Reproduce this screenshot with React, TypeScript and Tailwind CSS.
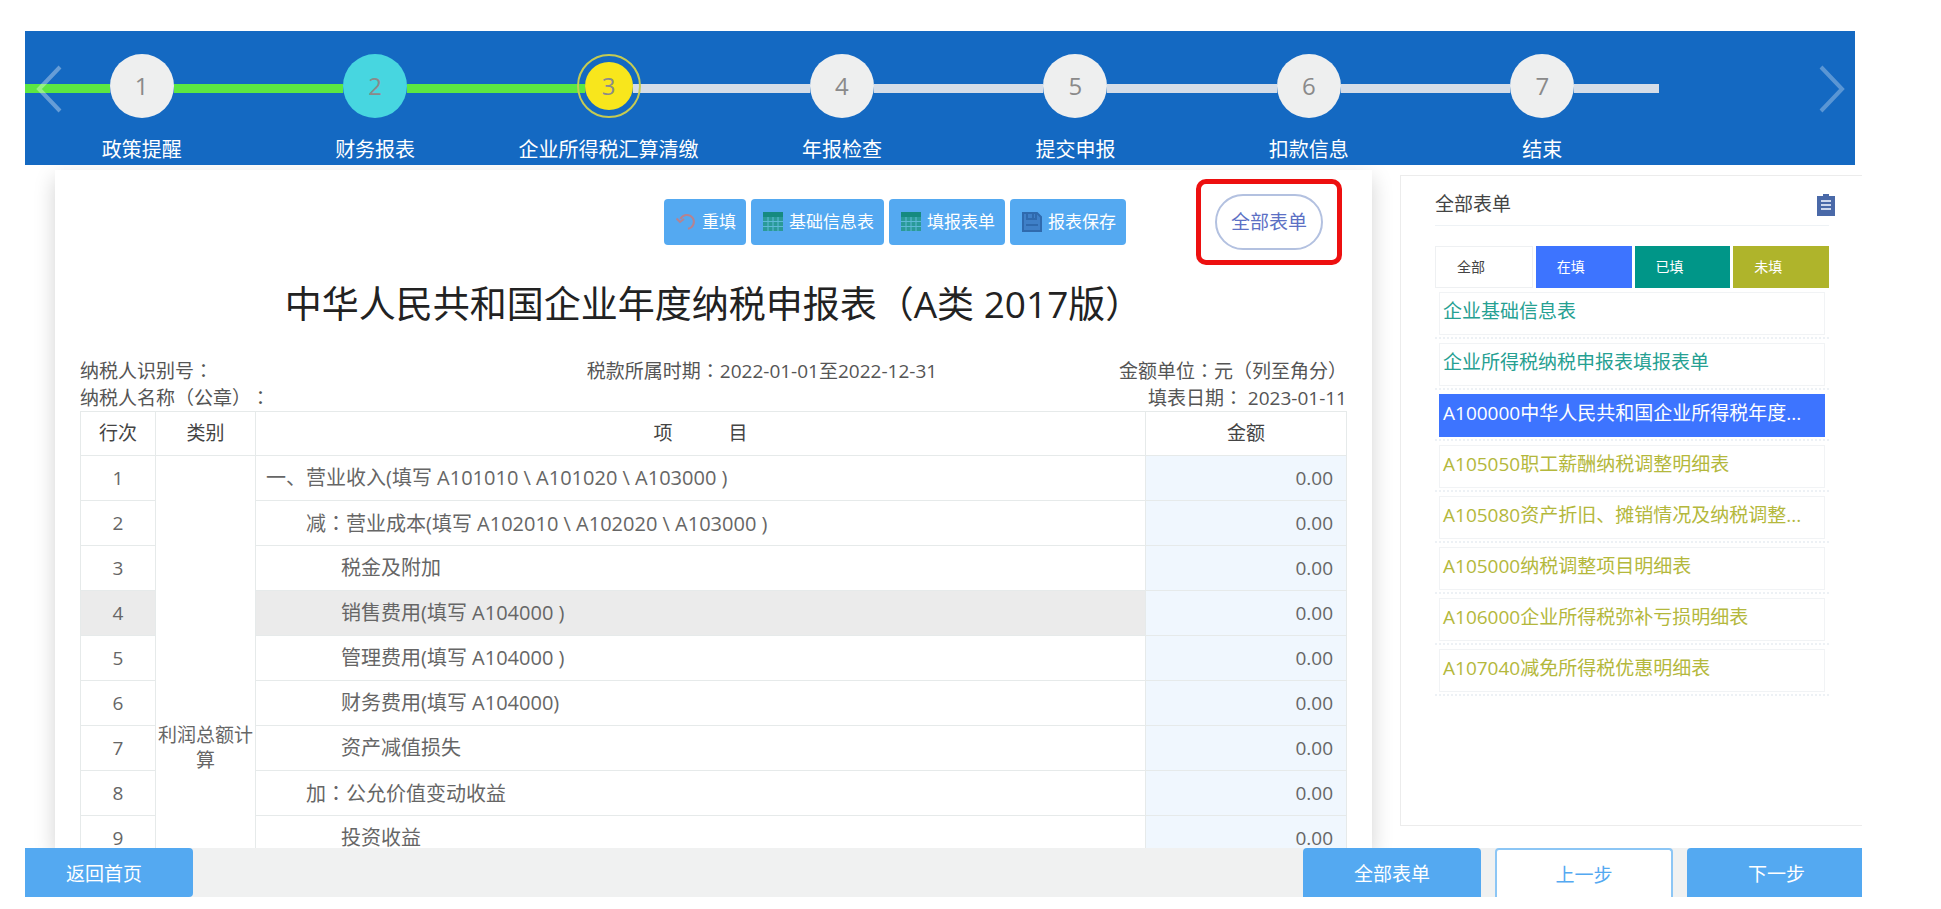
import React from 'react';
import clsx from 'clsx';

interface Step {
  label: string;
  state: 'visited' | 'done' | 'current' | 'todo';
}

interface ReportRow {
  no: string;
  item: string;
  indent: string;
  amount: string;
}

interface FormLink {
  title: string;
  status: 'filled' | 'editing' | 'empty';
}

const STEPS: Step[] = [
  { label: '政策提醒', state: 'visited' },
  { label: '财务报表', state: 'done' },
  { label: '企业所得税汇算清缴', state: 'current' },
  { label: '年报检查', state: 'todo' },
  { label: '提交申报', state: 'todo' },
  { label: '扣款信息', state: 'todo' },
  { label: '结束', state: 'todo' },
];

const ROWS: ReportRow[] = [
  { no: '1', item: '一、营业收入(填写 A101010 \\ A101020 \\ A103000 )', indent: 'pl-[10px]', amount: '0.00' },
  { no: '2', item: '减：营业成本(填写 A102010 \\ A102020 \\ A103000 )', indent: 'pl-[50px]', amount: '0.00' },
  { no: '3', item: '税金及附加', indent: 'pl-[85px]', amount: '0.00' },
  { no: '4', item: '销售费用(填写 A104000 )', indent: 'pl-[85px]', amount: '0.00' },
  { no: '5', item: '管理费用(填写 A104000 )', indent: 'pl-[85px]', amount: '0.00' },
  { no: '6', item: '财务费用(填写 A104000)', indent: 'pl-[85px]', amount: '0.00' },
  { no: '7', item: '资产减值损失', indent: 'pl-[85px]', amount: '0.00' },
  { no: '8', item: '加：公允价值变动收益', indent: 'pl-[50px]', amount: '0.00' },
  { no: '9', item: '投资收益', indent: 'pl-[85px]', amount: '0.00' },
];

// The profit section spans 13 lines of the form
const SECTION_LINES = 13;
const ACTIVE_ROW = '4';

const FORMS: FormLink[] = [
  { title: '企业基础信息表', status: 'filled' },
  { title: '企业所得税纳税申报表填报表单', status: 'filled' },
  { title: 'A100000中华人民共和国企业所得税年度...', status: 'editing' },
  { title: 'A105050职工薪酬纳税调整明细表', status: 'empty' },
  { title: 'A105080资产折旧、摊销情况及纳税调整...', status: 'empty' },
  { title: 'A105000纳税调整项目明细表', status: 'empty' },
  { title: 'A106000企业所得税弥补亏损明细表', status: 'empty' },
  { title: 'A107040减免所得税优惠明细表', status: 'empty' },
];

const FORM_STYLES: Record<FormLink['status'], string> = {
  filled: 'border-[#f1f3f5] text-[#26a092]',
  editing: 'border-[#3d74ff] bg-[#3d74ff] text-white',
  empty: 'border-[#f1f3f5] text-[#b4b83c]',
};

const FILTERS = [
  { label: '全部', className: 'border border-[#eef0f2] bg-white text-[#444]' },
  { label: '在填', className: 'bg-[#3d74ff] text-white' },
  { label: '已填', className: 'bg-[#009688] text-white' },
  { label: '未填', className: 'bg-[#afb42b] text-white' },
];

// Full-width colons and brackets sit in the middle of their cell
const Han: React.FC<{ text: string }> = ({ text }) => (
  <>
    {text.split(/([：（）])/).map((part, i) =>
      i % 2 ? (
        <span key={i} className="font-['Noto_Sans_CJK_TC',sans-serif]">
          {part}
        </span>
      ) : (
        part
      ),
    )}
  </>
);

const ResetIcon = () => (
  <svg viewBox="0 0 20 20" className="size-5" fill="none" stroke="#b58391" strokeWidth="2" aria-hidden>
    <path d="M4.500 7A7 7 0 1 1 12 16.800" />
    <path d="M0.500 6.500L4 10l4-3" />
  </svg>
);

const GridIcon = () => (
  <svg viewBox="0 0 20 20" className="size-5" aria-hidden>
    <path d="M0 0h20v19H0z" fill="#2a9a98" />
    <path d="M0 0h20v5H0z" fill="#168a80" />
    <path d="M0 9.500h20M0 14.500h20M5 5v14M10 5v14M15 5v14" stroke="#5fb9d6" strokeWidth="1" />
  </svg>
);

const SaveIcon = () => (
  <svg viewBox="0 0 20 20" className="size-5" fill="none" stroke="#2f6aae" strokeWidth="2" aria-hidden>
    <path d="M1 1h14l4 4v14H1z" fill="#3f80c8" />
    <path d="M5 1v6h9V1M11 2v4M4 13h12" />
  </svg>
);

const ClipboardIcon = () => (
  <svg viewBox="0 0 18 22" className="h-[22px] w-[18px]" aria-hidden>
    <path d="M6 0h6v2h6v20H0V2h6z" fill="#4a69a8" />
    <path d="M4 7h10M4 11h10M4 15h10" stroke="#cdd7ec" strokeWidth="2" />
  </svg>
);

const TOOLS = [
  { label: '重填', icon: ResetIcon },
  { label: '基础信息表', icon: GridIcon },
  { label: '填报表单', icon: GridIcon },
  { label: '报表保存', icon: SaveIcon },
];

const StepBar: React.FC = () => (
  <nav className="relative mr-[7px] h-[134px] shrink-0 bg-[#1469c2] pt-[23px] pr-[196px]" aria-label="申报步骤">
    <ol className="flex">
      {STEPS.map(({ label, state }, i) => (
        <li key={label} className="flex flex-1 basis-0 flex-col items-center">
          <div className="flex h-16 w-full items-center">
            <span className={clsx('mt-1 h-[9px] flex-1', state === 'todo' ? 'bg-[#d5dde8]' : 'bg-[#5ce742]')} />
            <span
              className={clsx(
                'relative flex items-center justify-center rounded-full text-2xl text-[#8a8a8a]',
                state === 'current' ? 'size-12 bg-[#f8e61c]' : 'size-16',
                state === 'done' && 'bg-[#47d6e0]',
                (state === 'visited' || state === 'todo') && 'bg-[#eeefef]',
              )}
            >
              {i + 1}
              {state === 'current' && (
                <span className="absolute -inset-2 rounded-full border-2 border-[#c5cb52]" />
              )}
            </span>
            <span
              className={clsx(
                'mt-1 h-[9px] flex-1',
                state === 'visited' || state === 'done' ? 'bg-[#5ce742]' : 'bg-[#d5dde8]',
              )}
            />
          </div>
          <span className="mt-5 text-xl leading-6 whitespace-nowrap text-white">{label}</span>
        </li>
      ))}
    </ol>
    <button type="button" aria-label="上一页" className="absolute top-[34px] left-[11px]">
      <svg viewBox="0 0 26 48" className="h-12 w-[26px]" fill="none" stroke="#fff" strokeOpacity="0.35" strokeWidth="4">
        <path d="M24 2L3 24l21 22" />
      </svg>
    </button>
    <button type="button" aria-label="下一页" className="absolute top-[34px] right-[10px]">
      <svg viewBox="0 0 26 48" className="h-12 w-[26px]" fill="none" stroke="#fff" strokeOpacity="0.3" strokeWidth="4">
        <path d="M2 2l21 22L2 46" />
      </svg>
    </button>
  </nav>
);

const ReportTable: React.FC = () => (
  <table className="w-full table-fixed border-collapse text-[#666]">
    <colgroup>
      <col className="w-[75px]" />
      <col className="w-[100px]" />
      <col />
      <col className="w-[201px]" />
    </colgroup>
    <thead>
      <tr className="h-11 text-[#444]">
        <th className="border border-[#e6eaea] font-normal">行次</th>
        <th className="border border-[#e6eaea] font-normal">类别</th>
        <th className="border border-[#e6eaea] font-normal">
          <div className="flex justify-center gap-14">
            <span>项</span>
            <span>目</span>
          </div>
        </th>
        <th className="border border-[#e6eaea] font-normal">金额</th>
      </tr>
    </thead>
    <tbody>
      {ROWS.map((row, i) => (
        <tr key={row.no} className="h-[45px]">
          <td className={clsx('border border-[#e6eaea] text-center', row.no === ACTIVE_ROW && 'bg-[#ebebeb]')}>
            {row.no}
          </td>
          {i === 0 && (
            <td rowSpan={SECTION_LINES} className="border border-[#e6eaea] text-center leading-[25px]">
              利润总额计算
            </td>
          )}
          <td className={clsx('border border-[#e6eaea] text-xl', row.indent, row.no === ACTIVE_ROW && 'bg-[#ebebeb]')}>
            <Han text={row.item} />
          </td>
          <td className="border border-[#e6eaea] bg-[#f0f7fe] pr-[13px] text-right">{row.amount}</td>
        </tr>
      ))}
      {Array.from({ length: SECTION_LINES - ROWS.length }, (_, i) => (
        <tr key={i} className="h-[45px]">
          <td className="border border-[#e6eaea]" />
          <td className="border border-[#e6eaea]" />
          <td className="border border-[#e6eaea] bg-[#f0f7fe]" />
        </tr>
      ))}
    </tbody>
  </table>
);

const ReportCard: React.FC = () => (
  <section className="mt-[5px] ml-[30px] min-w-0 flex-1 bg-white px-[25px] pt-[9px] shadow-[0_8px_20px_rgba(0,0,0,0.18)]">
    <div className="flex items-center justify-end">
      <div className="flex gap-[5px]">
        {TOOLS.map(({ label, icon: Icon }) => (
          <button
            key={label}
            type="button"
            className="flex h-[46px] items-center gap-[6px] rounded-sm bg-[#54a9f1] pr-[10px] pl-3 text-[17px] whitespace-nowrap text-white"
          >
            <Icon />
            {label}
          </button>
        ))}
      </div>
      <div className="mr-[5px] ml-[70px] rounded-[10px] border-[5px] border-[#ed1010] px-[14px] py-[10px]">
        <button
          type="button"
          className="h-14 w-[108px] rounded-full border-2 border-[#b3c1e0] text-[#5c70c4]"
        >
          全部表单
        </button>
      </div>
    </div>

    <h1 className="mt-[13px] text-center text-[37px] leading-[48px] whitespace-nowrap text-[#222]">
      <Han text="中华人民共和国企业年度纳税申报表（A类 2017版）" />
    </h1>

    <div className="mt-[29px] grid grid-cols-[2fr_3fr] leading-[26px] whitespace-nowrap text-[#555]">
      <span>
        <Han text="纳税人识别号：" />
      </span>
      <div className="flex justify-between">
        <span>
          <Han text="税款所属时期：2022-01-01至2022-12-31" />
        </span>
        <span>
          <Han text="金额单位：元（列至角分）" />
        </span>
      </div>
      <span>
        <Han text="纳税人名称（公章）：" />
      </span>
      <span className="text-right">
        <Han text="填表日期： 2023-01-11" />
      </span>
    </div>

    <ReportTable />
  </section>
);

const FormSidebar: React.FC = () => (
  <aside className="mt-[10px] mb-[22px] ml-7 w-[462px] shrink-0 border-y border-l border-[#ececec] bg-white pr-[33px] pl-[34px]">
    <header className="flex h-[50px] items-center justify-between border-b border-[#eef2f5] pt-2">
      <h2 className="text-[#444]">全部表单</h2>
      <span className="-mr-[6px]">
        <ClipboardIcon />
      </span>
    </header>
    <div className="mt-5 flex gap-[3px]">
      {FILTERS.map(({ label, className }) => (
        <button
          key={label}
          type="button"
          className={clsx('h-[42px] flex-1 pl-[21px] text-left text-sm', className)}
        >
          {label}
        </button>
      ))}
    </div>
    <ul>
      {FORMS.map(({ title, status }) => (
        <li key={title} className="border-b-2 border-dotted border-[#edf1f5] px-1 pt-1 pb-[2px]">
          <a
            href="#"
            className={clsx('block h-[43px] truncate border pr-4 pl-[3px] leading-[37px]', FORM_STYLES[status])}
          >
            {title}
          </a>
        </li>
      ))}
    </ul>
  </aside>
);

const ActionBar: React.FC = () => (
  <footer className="flex h-[49px] shrink-0 justify-between bg-[#f0f1f1]">
    <button type="button" className="w-[168px] rounded-r-sm bg-[#54a9f1] pt-1 pr-[10px] text-white">
      返回首页
    </button>
    <div className="flex gap-[14px]">
      <button type="button" className="w-[178px] rounded-t-sm bg-[#54a9f1] pt-1 text-white">
        全部表单
      </button>
      <button
        type="button"
        className="w-[178px] rounded-t-sm border-2 border-b-0 border-[#8cc6f5] bg-white pt-1 text-[#54a9f1]"
      >
        上一步
      </button>
      <button type="button" className="w-[175px] rounded-tl-sm bg-[#54a9f1] pt-1 pl-1 text-white">
        下一步
      </button>
    </div>
  </footer>
);

export default function App() {
  return (
    <div className="flex h-screen flex-col bg-white pt-[31px] pr-[79px] pb-3 pl-[25px] font-['Open_Sans','Noto_Sans_CJK_SC',sans-serif] text-[19px] [text-spacing-trim:space-all]">
      <StepBar />
      <main className="flex min-h-0 flex-1 overflow-hidden">
        <ReportCard />
        <FormSidebar />
      </main>
      <ActionBar />
    </div>
  );
}
